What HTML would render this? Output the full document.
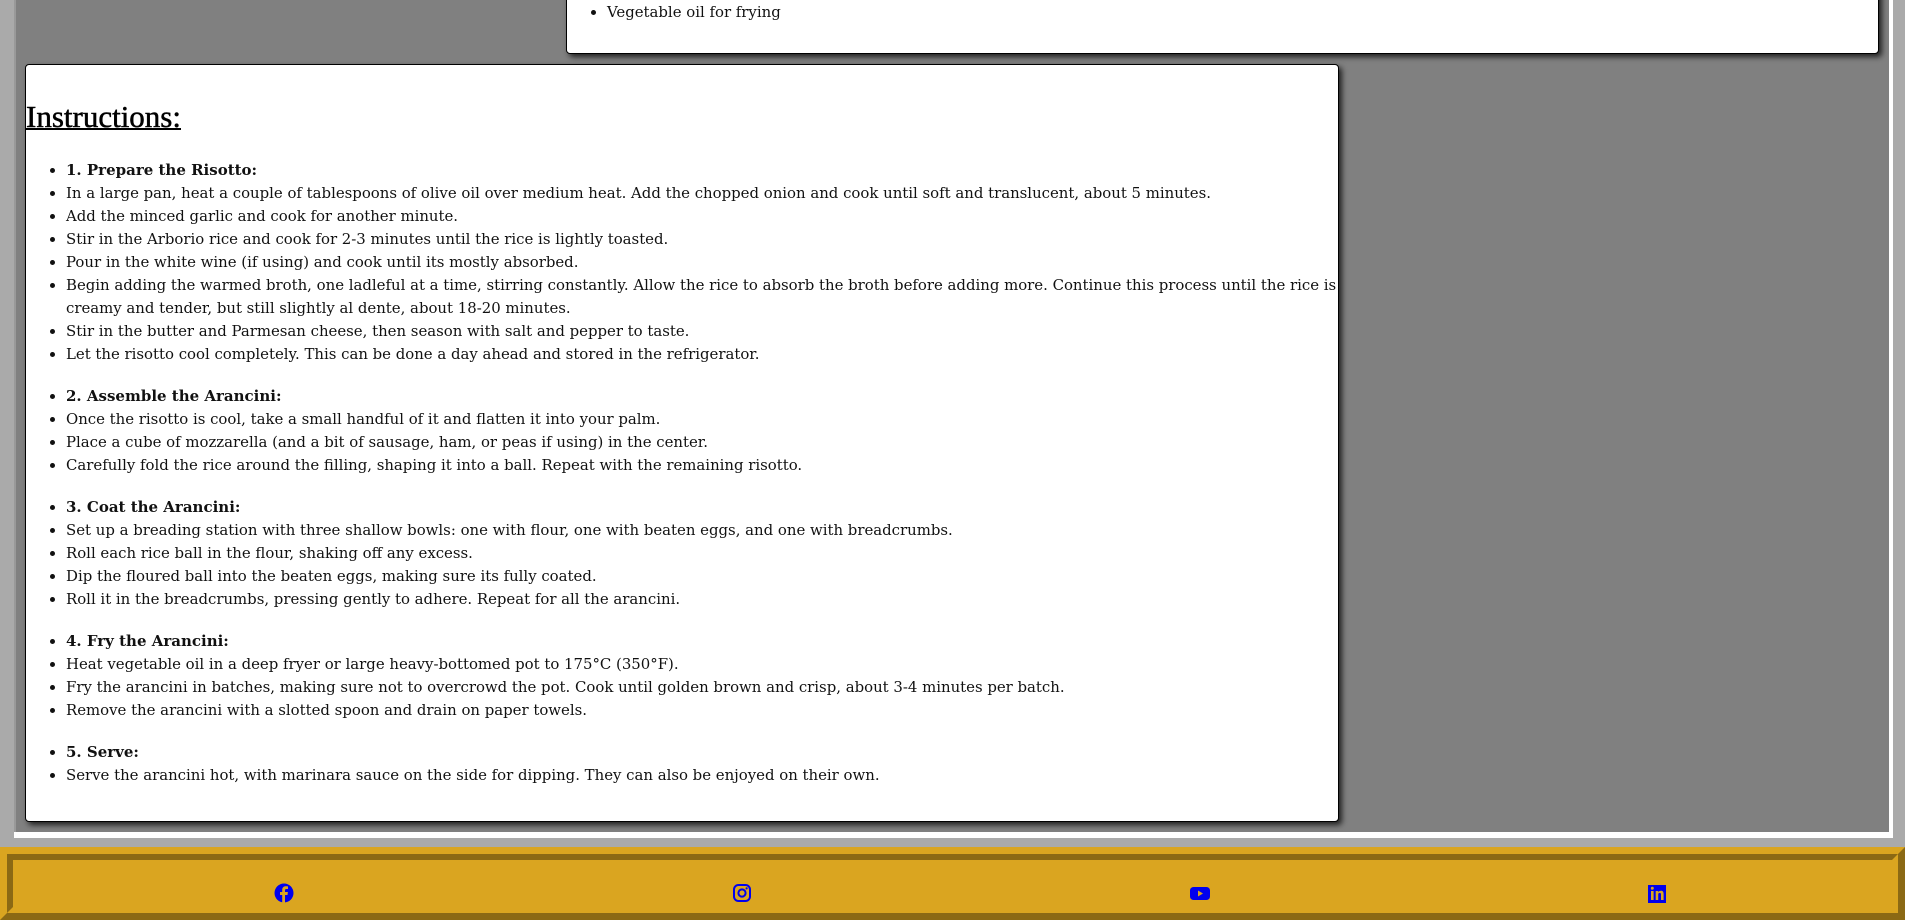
<!DOCTYPE html>
<html><head><meta charset="utf-8"><style>
html,body{margin:0;padding:0;width:1905px;height:920px;overflow:hidden;background:#aaa;position:relative}
.main{position:absolute;left:0;top:-10px;width:1905px;height:848px;background:#aaa}
.inner{position:absolute;left:14px;top:0;width:1873px;height:842px;background:#808080;border-left:2px solid #999}
.wstrip{position:absolute;left:14px;top:0;width:1879px;height:848px;background:#fff}
.card{position:absolute;background:#fff;border:1px solid #000;border-radius:4px;box-shadow:3px 3px 6px rgba(0,0,0,.75);font-family:"DejaVu Serif","Liberation Serif",serif;font-size:14.9px;line-height:23px;color:#111}
ul{margin:0 0 19px;padding-left:40px}
li b{font-weight:bold;font-size:15px}
h2{font-family:"Liberation Serif",serif;font-weight:normal;font-size:31px;line-height:36px;margin:34px 0 24px;text-decoration:underline;text-decoration-thickness:2px;color:#000;-webkit-text-stroke:0.5px #000}
.footer{position:absolute;left:0;top:847px;width:1905px;height:73px;box-sizing:border-box;background:#DAA520;border-style:solid;border-width:7px;border-color:#DAA520 #8B6914 #8B6914 #DAA520}
.fin{position:absolute;left:0;top:0;right:0;bottom:0;border-style:solid;border-width:6px;border-color:#8B6914 #DAA520 #DAA520 #8B6914}
.ic{position:absolute;top:29px;width:20px;height:20px}
</style></head><body>
<div class="main"><div class="wstrip"></div><div class="inner"></div></div>
<div class="card" style="left:566px;top:-20px;width:1311px;height:72px;">
<ul style="margin:20px 0 0;"><li>Vegetable oil for frying</li></ul>
</div>
<div class="card" style="left:25px;top:64px;width:1312px;height:756px;">
<h2>Instructions:</h2>
<ul>
<li><b>1. Prepare the Risotto:</b></li>
<li>In a large pan, heat a couple of tablespoons of olive oil over medium heat. Add the chopped onion and cook until soft and translucent, about 5 minutes.</li>
<li>Add the minced garlic and cook for another minute.</li>
<li>Stir in the Arborio rice and cook for 2-3 minutes until the rice is lightly toasted.</li>
<li>Pour in the white wine (if using) and cook until its mostly absorbed.</li>
<li>Begin adding the warmed broth, one ladleful at a time, stirring constantly. Allow the rice to absorb the broth before adding more. Continue this process until the rice is creamy and tender, but still slightly al dente, about 18-20 minutes.</li>
<li>Stir in the butter and Parmesan cheese, then season with salt and pepper to taste.</li>
<li>Let the risotto cool completely. This can be done a day ahead and stored in the refrigerator.</li>
</ul>
<ul>
<li><b>2. Assemble the Arancini:</b></li>
<li>Once the risotto is cool, take a small handful of it and flatten it into your palm.</li>
<li>Place a cube of mozzarella (and a bit of sausage, ham, or peas if using) in the center.</li>
<li>Carefully fold the rice around the filling, shaping it into a ball. Repeat with the remaining risotto.</li>
</ul>
<ul>
<li><b>3. Coat the Arancini:</b></li>
<li>Set up a breading station with three shallow bowls: one with flour, one with beaten eggs, and one with breadcrumbs.</li>
<li>Roll each rice ball in the flour, shaking off any excess.</li>
<li>Dip the floured ball into the beaten eggs, making sure its fully coated.</li>
<li>Roll it in the breadcrumbs, pressing gently to adhere. Repeat for all the arancini.</li>
</ul>
<ul>
<li><b>4. Fry the Arancini:</b></li>
<li>Heat vegetable oil in a deep fryer or large heavy-bottomed pot to 175°C (350°F).</li>
<li>Fry the arancini in batches, making sure not to overcrowd the pot. Cook until golden brown and crisp, about 3-4 minutes per batch.</li>
<li>Remove the arancini with a slotted spoon and drain on paper towels.</li>
</ul>
<ul>
<li><b>5. Serve:</b></li>
<li>Serve the arancini hot, with marinara sauce on the side for dipping. They can also be enjoyed on their own.</li>
</ul>
</div>
<div class="footer"><div class="fin"></div>
<svg class="ic" style="left:267px" viewBox="0 0 20 20"><circle cx="10" cy="10" r="9.5" fill="#0000ee"/><path d="M11 20V12h2.5l.4-3H11V7.3c0-.8.3-1.3 1.4-1.3H14V3.4c-.3 0-1.2-.1-2.2-.1-2.2 0-3.6 1.3-3.6 3.7V9H6v3h2.2v8z" fill="#DAA520"/></svg>
<svg class="ic" style="left:725px" viewBox="0 0 20 20"><rect x="2" y="2" width="16" height="16" rx="4.5" fill="none" stroke="#0000ee" stroke-width="2"/><circle cx="10" cy="10" r="3.6" fill="none" stroke="#0000ee" stroke-width="2"/><circle cx="14.6" cy="5.4" r="1.1" fill="#0000ee"/></svg>
<svg class="ic" style="left:1182px;width:22px" viewBox="0 0 22 20"><rect x="1" y="4" width="20" height="13" rx="3.5" fill="#0000ee"/><path d="M9 7.5v6l5-3z" fill="#DAA520"/></svg>
<svg class="ic" style="left:1641px;width:18px" viewBox="0 0 18 20"><rect x="0" y="2" width="18" height="18" fill="#0000ee"/><rect x="3" y="8" width="2.6" height="9" fill="#DAA520"/><circle cx="4.3" cy="5.2" r="1.5" fill="#DAA520"/><path d="M7.7 8h2.5v1.3c.5-.9 1.5-1.5 2.8-1.5 2 0 2.6 1.3 2.6 3.3V17H13v-5.3c0-1-.2-1.8-1.3-1.8-1.1 0-1.5.8-1.5 1.9V17H7.7z" fill="#DAA520"/></svg>
</div>
</body></html>
